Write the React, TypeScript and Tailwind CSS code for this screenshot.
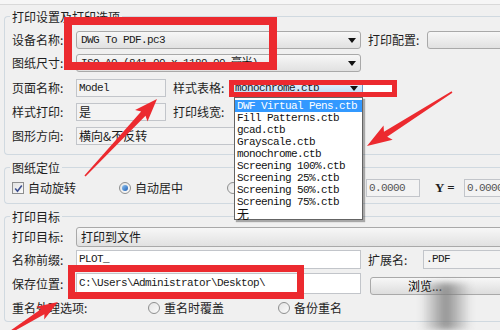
import type { ReactNode } from "react";

const mono = "font-['Liberation_Mono','Noto_Sans_CJK_SC',monospace] text-[11px] tracking-[-0.6px]";

function Arrow() {
    return (
        <svg width="8" height="5" viewBox="0 0 8 5" className="shrink-0 mr-[4px]">
            <polygon points="0,0 8,0 4,5" fill="#111" />
        </svg>
    )
}

function Combo({ text, isMono, className = "" }: { text: string, isMono?: boolean, className?: string }) {
    return (
        <div className={`flex items-center h-full rounded-[3px] border border-[#a9a9a9] bg-linear-to-b from-[#f7f7f7] to-[#e1e1e1] pl-[4px] overflow-hidden ${className}`}>
            <span className={`flex-1 whitespace-nowrap overflow-hidden text-[#1a1a1a] ${isMono ? mono : "text-[12px]"}`}>{text}</span>
            <Arrow />
        </div>
    )
}

function Field({ text, isMono, white, className = "" }: { text: string, isMono?: boolean, white?: boolean, className?: string }) {
    return (
        <div className={`flex items-center h-full border border-[#c2c5ca] px-[2px] overflow-hidden whitespace-nowrap text-[#1a1a1a] ${white ? "bg-white" : "bg-[#f3f3f3]"} ${isMono ? mono : "text-[12px]"} ${className}`}>
            {text}
        </div>
    )
}

function Label({ children, className = "w-[64px]" }: { children: ReactNode, className?: string }) {
    return <div className={`shrink-0 text-[12px] leading-[14px] text-[#1e1e1e] whitespace-nowrap ${className}`}>{children}</div>
}

function Radio({ checked }: { checked?: boolean }) {
    return (
        <span className="shrink-0 w-[12px] h-[12px] rounded-full border border-[#8e8f8f] bg-linear-to-br from-[#e4e4e4] to-[#fbfbfb] flex items-center justify-center">
            {checked && <span className="w-[6px] h-[6px] rounded-full bg-linear-to-br from-[#8fc3f0] to-[#1c5fb4]" />}
        </span>
    )
}

function Group({ title, children, className = "" }: { title: string, children: ReactNode, className?: string }) {
    return (
        <div className={`border-t border-l border-b border-[#d0d9e0] rounded-l-[4px] pl-[7px] ${className}`}>
            <div className="-mt-[7px] -ml-[2px] px-[2px] w-fit bg-[#f0f0f0] text-[12px] leading-[14px] text-[#1e1e1e]">{title}</div>
            {children}
        </div>
    )
}

function arrowPoints(tx: number, ty: number, hx: number, hy: number, tailW: number, neckW: number, headLen: number, headW: number) {
    const len = Math.hypot(hx - tx, hy - ty)
    const dx = (hx - tx) / len
    const dy = (hy - ty) / len
    const nx = -dy
    const ny = dx
    const cx = hx - dx * headLen
    const cy = hy - dy * headLen
    const pts = [
        [tx + nx * tailW / 2, ty + ny * tailW / 2],
        [cx + nx * neckW / 2, cy + ny * neckW / 2],
        [cx - dx * 3 + nx * headW / 2, cy - dy * 3 + ny * headW / 2],
        [hx, hy],
        [cx - dx * 3 - nx * headW / 2, cy - dy * 3 - ny * headW / 2],
        [cx - nx * neckW / 2, cy - ny * neckW / 2],
        [tx - nx * tailW / 2, ty - ny * tailW / 2],
    ]
    return pts.map(p => p.join(",")).join(" ")
}

const styles = [
    "DWF Virtual Pens.ctb",
    "Fill Patterns.ctb",
    "gcad.ctb",
    "Grayscale.ctb",
    "monochrome.ctb",
    "Screening 100%.ctb",
    "Screening 25%.ctb",
    "Screening 50%.ctb",
    "Screening 75%.ctb",
    "无",
]

export default function App() {
    return (
        <div className="relative w-[500px] h-[330px] overflow-hidden bg-[#f0f0f0] font-['Noto_Sans_CJK_SC',sans-serif]">
            <div className="h-[5px] bg-[#f6f6f6] border-b border-[#d9d9d9]" />
            <div className="pl-[4px] w-[600px]">
                <Group title="打印设置及打印选项" className="mt-[11px] pb-[9px]">
                    <div className="flex items-center h-[18px] mt-[7px]">
                        <Label>设备名称:</Label>
                        <Combo text="DWG To PDF.pc3" isMono className="w-[285px]" />
                        <Label className="w-[59px] ml-[7px]">打印配置:</Label>
                        <Combo text="" className="flex-1" />
                    </div>
                    <div className="flex items-center h-[18px] mt-[5px]">
                        <Label>图纸尺寸:</Label>
                        <Combo text="ISO A0 (841.00 x 1189.00 毫米)" isMono className="w-[285px]" />
                    </div>
                    <div className="flex items-center h-[18px] mt-[7px]">
                        <Label>页面名称:</Label>
                        <Field text="Model" isMono className="w-[90px]" />
                        <Label className="w-[58px] ml-[7px]">样式表格:</Label>
                        <div className="flex items-center h-[14px] w-[132px] border border-[#6d9cc8] bg-linear-to-b from-[#e8f4fd] to-[#bcdcf6] pl-[3px]">
                            <span className={`flex-1 ${mono} text-[#1a1a1a]`}>monochrome.ctb</span>
                            <Arrow />
                        </div>
                        <div className="w-[30px] h-[10px] bg-white" />
                    </div>
                    <div className="flex items-center h-[18px] mt-[6px]">
                        <Label>样式打印:</Label>
                        <Field text="是" className="w-[90px]" />
                        <Label className="w-[58px] ml-[7px]">打印线宽:</Label>
                    </div>
                    <div className="flex items-center h-[18px] mt-[6px]">
                        <Label>图形方向:</Label>
                        <Field text="横向&不反转" className="w-[285px]" />
                    </div>
                </Group>

                <Group title="图纸定位" className="mt-[12px] pb-[6px]">
                    <div className="flex items-center h-[18px] mt-[4px] text-[12px] text-[#1e1e1e]">
                        <div className="w-[107px] flex items-center gap-[4px]">
                            <span className="w-[12px] h-[12px] border border-[#8e8f8f] bg-linear-to-br from-[#e2e2e2] to-[#fbfbfb] flex items-center justify-center">
                                <svg width="9" height="9" viewBox="0 0 9 9">
                                    <polyline points="1.2,4.5 3.5,7.2 7.8,1.5" fill="none" stroke="#3d4f8f" strokeWidth="1.6" />
                                </svg>
                            </span>
                            自动旋转
                        </div>
                        <div className="w-[108px] flex items-center gap-[4px]">
                            <Radio checked />
                            自动居中
                        </div>
                        <div className="w-[139px] flex items-center">
                            <Radio />
                        </div>
                        <Field text="0.0000" isMono className="w-[54px] text-[#555]" />
                        <div className="w-[29px] ml-[15px] font-['Liberation_Serif',serif] font-bold text-[13px]">Y =</div>
                        <Field text="0.0000" isMono className="flex-1 text-[#555]" />
                    </div>
                </Group>

                <Group title="打印目标" className="mt-[12px] pb-[4px]">
                    <div className="flex items-center h-[20px] mt-[3px]">
                        <Label>打印目标:</Label>
                        <Combo text="打印到文件" className="flex-1" />
                    </div>
                    <div className="flex items-center h-[19px] mt-[3px]">
                        <Label>名称前缀:</Label>
                        <Field text="PLOT_" isMono white className="w-[285px]" />
                        <Label className="w-[55px] ml-[7px]">扩展名:</Label>
                        <Field text=".PDF" isMono className="flex-1" />
                    </div>
                    <div className="flex items-center h-[21px] mt-[4px]">
                        <Label>保存位置:</Label>
                        <Field text="C:\Users\Administrator\Desktop\" isMono white className="w-[285px]" />
                        <div className="flex-1 ml-[9px] h-[18px] mt-[4px] rounded-[3px] border border-[#a9a9a9] bg-linear-to-b from-[#f7f7f7] to-[#dddddd] text-[12px] flex items-center justify-center pr-[120px]">
                            浏览...
                        </div>
                    </div>
                    <div className="flex items-center h-[18px] mt-[5px] text-[12px] text-[#1e1e1e]">
                        <Label className="w-[136px]">重名处理选项:</Label>
                        <div className="w-[130px] flex items-center gap-[4px]">
                            <Radio />
                            重名时覆盖
                        </div>
                        <div className="flex items-center gap-[4px]">
                            <Radio />
                            备份重名
                        </div>
                    </div>
                </Group>
            </div>

            {/* open style list */}
            <div className="absolute left-[234px] top-[97px] w-[129px] h-[123px] bg-white border border-[#646464] shadow-[2px_2px_1px_rgba(0,0,0,0.3)] pt-[2px]">
                {styles.map((s, i) => (
                    <div
                        key={s}
                        className={`h-[12px] leading-[12px] pl-[2px] whitespace-nowrap ${i === 0 ? "bg-[#3399ff] text-white" : "text-[#111]"} ${s === "无" ? "text-[12px]" : mono}`}
                    >
                        {s}
                    </div>
                ))}
            </div>

            {/* smudge over browse button */}
            <div className="absolute left-[420px] top-[283px] w-[52px] h-[47px] bg-linear-to-r from-transparent via-[#7d7d7d] to-transparent blur-[3px] opacity-80" />

            {/* red annotations */}
            <div className="absolute left-[64px] top-[17px] w-[213px] h-[53px] border-[8px] border-[#ec2a2f]" />
            <div className="absolute left-[229px] top-[80px] w-[168px] h-[17px] border-[5px] border-[#ec2a2f]" />
            <div className="absolute left-[68px] top-[265px] w-[236px] h-[34px] border-[7px] border-[#ec2a2f]" />
            <svg className="absolute left-0 top-0 pointer-events-none" width="500" height="330">
                <polygon points={arrowPoints(85, 176, 157, 99, 1.5, 6, 20, 17)} fill="#ec2a2f" />
                <polygon points={arrowPoints(452, 92, 367, 146, 1.5, 6, 22, 17)} fill="#ec2a2f" />
                <polygon points={arrowPoints(4, 336, 58, 302, 1.5, 6, 18, 15)} fill="#ec2a2f" />
            </svg>
        </div>
    )
}
